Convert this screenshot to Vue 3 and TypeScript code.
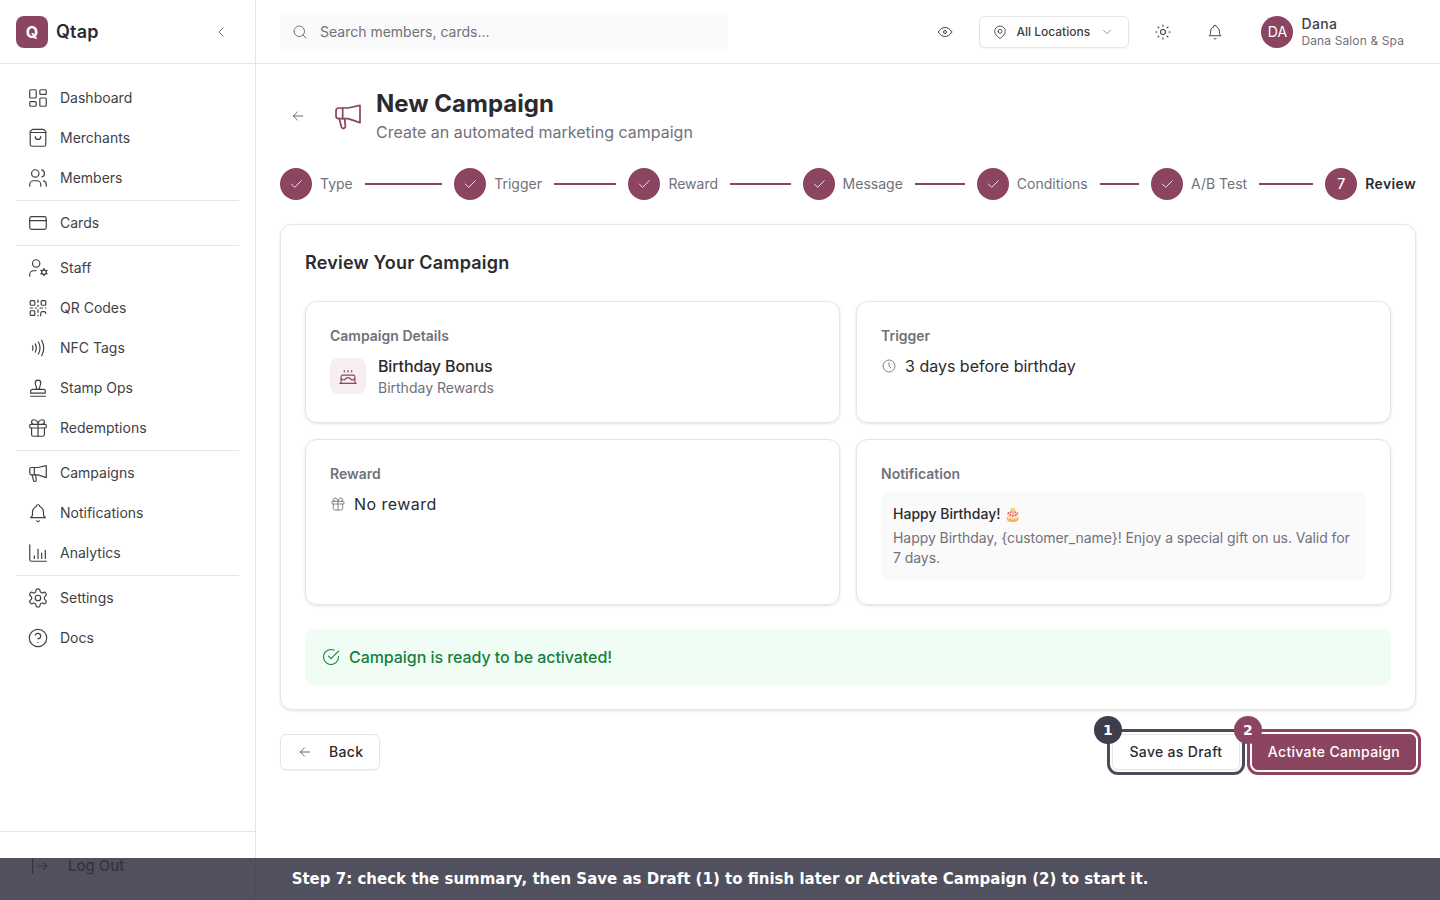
<script setup lang="ts">
// Icon paths all sit on a 24x24 viewBox
const icons: Record<string, string[]> = {
  dashboard: [
    'M4 3h5a1 1 0 0 1 1 1v7a1 1 0 0 1-1 1H4a1 1 0 0 1-1-1V4a1 1 0 0 1 1-1z',
    'M4 16h5a1 1 0 0 1 1 1v3a1 1 0 0 1-1 1H4a1 1 0 0 1-1-1v-3a1 1 0 0 1 1-1z',
    'M15 12h5a1 1 0 0 1 1 1v7a1 1 0 0 1-1 1h-5a1 1 0 0 1-1-1v-7a1 1 0 0 1 1-1z',
    'M15 3h5a1 1 0 0 1 1 1v3a1 1 0 0 1-1 1h-5a1 1 0 0 1-1-1V4a1 1 0 0 1 1-1z',
  ],
  bag: [
    'M6.500 2.500h11a2 2 0 0 1 1.600.8L20.500 5v14a2 2 0 0 1-2 2h-13a2 2 0 0 1-2-2V5l1.400-1.700A2 2 0 0 1 6.500 2.500z',
    'M3.500 6h17',
    'M9 10.500a3 3 0 0 0 6 0',
  ],
  users: [
    'M5 7a4 4 0 1 0 8 0a4 4 0 1 0-8 0',
    'M3 21v-2a4 4 0 0 1 4-4h4a4 4 0 0 1 4 4v2',
    'M16 3.130a4 4 0 0 1 0 7.750',
    'M21 21v-2a4 4 0 0 0-3-3.850',
  ],
  card: ['M5 5h14a2 2 0 0 1 2 2v10a2 2 0 0 1-2 2H5a2 2 0 0 1-2-2V7a2 2 0 0 1 2-2z', 'M3 9.500h18'],
  staff: [
    'M6 7a4 4 0 1 0 8 0a4 4 0 1 0-8 0',
    'M3 21v-2a4 4 0 0 1 4-4h3',
    'M16 16.500a2.500 2.500 0 1 0 5 0a2.500 2.500 0 1 0-5 0',
    'M18.500 12.500V14',
    'M18.500 19v1.500',
    'M22 14.500l-1.300.8',
    'M16.300 17.700l-1.300.8',
    'M15 14.500l1.300.8',
    'M20.700 17.700l1.300.8',
  ],
  qr: [
    'M3.500 5a1 1 0 0 1 1-1h3a1 1 0 0 1 1 1v3a1 1 0 0 1-1 1h-3a1 1 0 0 1-1-1z',
    'M15.500 5a1 1 0 0 1 1-1h3a1 1 0 0 1 1 1v3a1 1 0 0 1-1 1h-3a1 1 0 0 1-1-1z',
    'M3.500 16a1 1 0 0 1 1-1h3a1 1 0 0 1 1 1v3a1 1 0 0 1-1 1h-3a1 1 0 0 1-1-1z',
    'M12 3.500v2.500',
    'M12 9v1',
    'M3.500 12H6',
    'M9 12h1.500',
    'M14 12h3',
    'M20 12h.5',
    'M12 14v2.500',
    'M12 20v.5',
    'M15 20.500V18a2 2 0 0 1 2-2h1.500a2 2 0 0 1 2 2',
  ],
  nfc: [
    'M6 9.500a6 6 0 0 1 0 5',
    'M9 7.500a10 10 0 0 1 0 9',
    'M12.500 5.500a14 14 0 0 1 0 13',
    'M16 3.500a18 18 0 0 1 0 17',
  ],
  stamp: [
    'M9 6.500a3 3 0 1 1 6 0c0 2.500-1.500 3.500-1.500 7h-3C10.500 10 9 9 9 6.500z',
    'M4 15.500a2 2 0 0 1 2-2h12a2 2 0 0 1 2 2v2H4z',
    'M4 21h16',
  ],
  gift: [
    'M4 8h16a1 1 0 0 1 1 1v2a1 1 0 0 1-1 1H4a1 1 0 0 1-1-1V9a1 1 0 0 1 1-1z',
    'M12 8v13',
    'M19 12v7a2 2 0 0 1-2 2H7a2 2 0 0 1-2-2v-7',
    'M7.500 8a2.500 2.500 0 0 1 0-5c2.500 0 4.500 2.500 4.500 5c0-2.500 2-5 4.500-5a2.500 2.500 0 0 1 0 5',
  ],
  megaphone: [
    'M21 4v13l-9-3H5a2 2 0 0 1-2-2V8a2 2 0 0 1 2-2h7z',
    'M8 6v8',
    'M5.500 14l1.500 6a1.500 1.500 0 0 0 3-.5L9.500 14',
  ],
  bell: [
    'M10 5a2 2 0 1 1 4 0a7 7 0 0 1 4 6v3a4 4 0 0 0 2 3H4a4 4 0 0 0 2-3v-3a7 7 0 0 1 4-6z',
    'M10.500 20.500a1.700 1.700 0 0 0 3 0',
  ],
  chart: ['M3 3v16a2 2 0 0 0 2 2h16', 'M8 18v-3', 'M12 18V8', 'M16 18v-6', 'M20 18v-9'],
  settings: [
    'M12.220 2h-.44a2 2 0 0 0-2 2v.18a2 2 0 0 1-1 1.730l-.43.25a2 2 0 0 1-2 0l-.15-.08a2 2 0 0 0-2.730.73l-.22.38a2 2 0 0 0 .73 2.730l.15.1a2 2 0 0 1 1 1.720v.51a2 2 0 0 1-1 1.740l-.15.09a2 2 0 0 0-.73 2.730l.22.38a2 2 0 0 0 2.730.73l.15-.08a2 2 0 0 1 2 0l.43.25a2 2 0 0 1 1 1.730V20a2 2 0 0 0 2 2h.44a2 2 0 0 0 2-2v-.18a2 2 0 0 1 1-1.730l.43-.25a2 2 0 0 1 2 0l.15.08a2 2 0 0 0 2.730-.73l.22-.39a2 2 0 0 0-.73-2.730l-.15-.08a2 2 0 0 1-1-1.740v-.5a2 2 0 0 1 1-1.740l.15-.09a2 2 0 0 0 .73-2.730l-.22-.38a2 2 0 0 0-2.730-.73l-.15.08a2 2 0 0 1-2 0l-.43-.25a2 2 0 0 1-1-1.730V4a2 2 0 0 0-2-2z',
    'M9 12a3 3 0 1 0 6 0a3 3 0 1 0-6 0',
  ],
  help: [
    'M2.500 12a9.500 9.500 0 1 0 19 0a9.500 9.500 0 1 0-19 0',
    'M9.090 9a3 3 0 0 1 5.830 1c0 2-3 3-3 3',
    'M12 17h.01',
  ],
  logout: ['M5 4v16', 'M11 12h9', 'M17 8.500l3.500 3.500l-3.500 3.500'],
  search: ['M4 11a7 7 0 1 0 14 0a7 7 0 1 0-14 0', 'M20 20l-4-4'],
  chevLeft: ['M15 6l-6 6l6 6'],
  chevDown: ['M6 9l6 6l6-6'],
  arrowLeft: ['M5 12h14', 'M5 12l6 6', 'M5 12l6-6'],
  eye: [
    'M10 12a2 2 0 1 0 4 0a2 2 0 1 0-4 0',
    'M21 12c-2.400 4-5.400 6-9 6c-3.600 0-6.600-2-9-6c2.400-4 5.400-6 9-6c3.600 0 6.600 2 9 6',
  ],
  pin: [
    'M9 11a3 3 0 1 0 6 0a3 3 0 0 0-6 0',
    'M17.657 16.657L13.414 20.900a2 2 0 0 1-2.827 0l-4.244-4.243a8 8 0 1 1 11.314 0z',
  ],
  sun: [
    'M9 12a3 3 0 1 0 6 0a3 3 0 1 0-6 0',
    'M12 3.500v1.500',
    'M12 19v1.500',
    'M3.500 12H5',
    'M19 12h1.500',
    'M6 6l1 1',
    'M17 17l1 1',
    'M6 18l1-1',
    'M17 7l1-1',
  ],
  check: ['M5 12l5 5l10-10'],
  checkCircle: ['M21 11.100V12a9 9 0 1 1-5.300-8.200', 'M9 11l3 3l9-9'],
  clock: ['M3 12a9 9 0 1 0 18 0a9 9 0 1 0-18 0', 'M12 7v5l3 3'],
  cake: [
    'M3 20h18',
    'M4.500 20v-7a2 2 0 0 1 2-2h11a2 2 0 0 1 2 2v7',
    'M4.500 15c1.500 1.500 3.500 1.500 5 0s3.500-1.500 5 0s3.500 1.500 5 0',
    'M8 6v1.500',
    'M12 6v1.500',
    'M16 6v1.500',
  ],
}

interface NavItem {
  label: string
  icon: string
}

const navGroups: NavItem[][] = [
  [
    { label: 'Dashboard', icon: 'dashboard' },
    { label: 'Merchants', icon: 'bag' },
    { label: 'Members', icon: 'users' },
  ],
  [{ label: 'Cards', icon: 'card' }],
  [
    { label: 'Staff', icon: 'staff' },
    { label: 'QR Codes', icon: 'qr' },
    { label: 'NFC Tags', icon: 'nfc' },
    { label: 'Stamp Ops', icon: 'stamp' },
    { label: 'Redemptions', icon: 'gift' },
  ],
  [
    { label: 'Campaigns', icon: 'megaphone' },
    { label: 'Notifications', icon: 'bell' },
    { label: 'Analytics', icon: 'chart' },
  ],
  [
    { label: 'Settings', icon: 'settings' },
    { label: 'Docs', icon: 'help' },
  ],
]

const doneSteps = ['Type', 'Trigger', 'Reward', 'Message', 'Conditions', 'A/B Test']
</script>

<template>
  <div class="app">
    <aside class="sidebar">
      <div class="brand">
        <span class="logo">Q</span>
        <span class="brand-name">Qtap</span>
        <svg class="ico collapse" viewBox="0 0 24 24"><path v-for="d in icons.chevLeft" :key="d" :d="d" /></svg>
      </div>
      <nav class="nav">
        <div v-for="(group, i) in navGroups" :key="i" class="nav-group">
          <a v-for="item in group" :key="item.label" class="nav-item">
            <svg class="ico nav-ico" viewBox="0 0 24 24"><path v-for="d in icons[item.icon]" :key="d" :d="d" /></svg>
            {{ item.label }}
          </a>
        </div>
      </nav>
      <div class="side-foot">
        <a class="nav-item logout">
          <svg class="ico nav-ico" viewBox="0 0 24 24"><path v-for="d in icons.logout" :key="d" :d="d" /></svg>
          Log Out
        </a>
      </div>
    </aside>

    <div class="main">
      <header class="topbar">
        <div class="search">
          <svg class="ico search-ico" viewBox="0 0 24 24"><path v-for="d in icons.search" :key="d" :d="d" /></svg>
          <span>Search members, cards...</span>
        </div>
        <div class="top-right">
          <svg class="ico top-ico eye" viewBox="0 0 24 24"><path v-for="d in icons.eye" :key="d" :d="d" /></svg>
          <div class="loc">
            <svg class="ico loc-pin" viewBox="0 0 24 24"><path v-for="d in icons.pin" :key="d" :d="d" /></svg>
            <span class="loc-text">All Locations</span>
            <svg class="ico loc-chev" viewBox="0 0 24 24"><path v-for="d in icons.chevDown" :key="d" :d="d" /></svg>
          </div>
          <svg class="ico top-ico sun" viewBox="0 0 24 24"><path v-for="d in icons.sun" :key="d" :d="d" /></svg>
          <svg class="ico top-ico bell" viewBox="0 0 24 24"><path v-for="d in icons.bell" :key="d" :d="d" /></svg>
          <div class="user">
            <span class="avatar">DA</span>
            <div class="user-text">
              <div class="user-name">Dana</div>
              <div class="user-org">Dana Salon &amp; Spa</div>
            </div>
          </div>
        </div>
      </header>

      <main class="content">
        <div class="page-head">
          <span class="back-btn">
            <svg class="ico back-ico" viewBox="0 0 24 24"><path v-for="d in icons.arrowLeft" :key="d" :d="d" /></svg>
          </span>
          <svg class="ico head-ico" viewBox="0 0 24 24"><path v-for="d in icons.megaphone" :key="d" :d="d" /></svg>
          <div>
            <h1>New Campaign</h1>
            <p>Create an automated marketing campaign</p>
          </div>
        </div>

        <div class="steps">
          <div v-for="s in doneSteps" :key="s" class="step">
            <span class="dot">
              <svg class="ico dot-check" viewBox="0 0 24 24"><path v-for="d in icons.check" :key="d" :d="d" /></svg>
            </span>
            <span class="step-label">{{ s }}</span>
            <span class="line"></span>
          </div>
          <div class="step last">
            <span class="dot">7</span>
            <span class="step-label current">Review</span>
          </div>
        </div>

        <section class="card">
          <h2>Review Your Campaign</h2>
          <div class="grid">
            <div class="sub">
              <div class="sub-label">Campaign Details</div>
              <div class="detail">
                <span class="cake-box">
                  <svg class="ico cake" viewBox="0 0 24 24"><path v-for="d in icons.cake" :key="d" :d="d" /></svg>
                </span>
                <div>
                  <div class="detail-name">Birthday Bonus</div>
                  <div class="detail-sub">Birthday Rewards</div>
                </div>
              </div>
            </div>
            <div class="sub">
              <div class="sub-label">Trigger</div>
              <div class="val">
                <svg class="ico val-ico" viewBox="0 0 24 24"><path v-for="d in icons.clock" :key="d" :d="d" /></svg>
                3 days before birthday
              </div>
            </div>
            <div class="sub">
              <div class="sub-label">Reward</div>
              <div class="val wide">
                <svg class="ico val-ico" viewBox="0 0 24 24"><path v-for="d in icons.gift" :key="d" :d="d" /></svg>
                No reward
              </div>
            </div>
            <div class="sub">
              <div class="sub-label">Notification</div>
              <div class="notif">
                <div class="notif-title">Happy Birthday! 🎂</div>
                <div class="notif-body">Happy Birthday, {customer_name}! Enjoy a special gift on us. Valid for 7 days.</div>
              </div>
            </div>
          </div>
          <div class="ready">
            <svg class="ico ready-ico" viewBox="0 0 24 24"><path v-for="d in icons.checkCircle" :key="d" :d="d" /></svg>
            Campaign is ready to be activated!
          </div>
        </section>

        <div class="actions">
          <button class="btn">
            <svg class="ico btn-ico" viewBox="0 0 24 24"><path v-for="d in icons.arrowLeft" :key="d" :d="d" /></svg>
            Back
          </button>
          <div class="actions-right">
            <button class="btn mark mark-dark">
              <span class="badge">1</span>
              Save as Draft
            </button>
            <button class="btn primary mark mark-primary">
              <span class="badge">2</span>
              Activate Campaign
            </button>
          </div>
        </div>
      </main>
    </div>

    <div class="hint">Step 7: check the summary, then Save as Draft (1) to finish later or Activate Campaign (2) to start it.</div>
  </div>
</template>

<style scoped>
.app {
  display: flex;
  height: 900px;
  overflow: hidden;
  background: #fff;
  color: #2b2b2f;
  font-family: Inter, "Noto Sans", sans-serif;
  font-size: 14px;
  line-height: 20px;
}
.ico {
  fill: none;
  stroke: currentColor;
  stroke-width: 1.3;
  stroke-linecap: round;
  stroke-linejoin: round;
  flex: none;
  display: block;
}

/* sidebar */
.sidebar {
  width: 256px;
  flex: none;
  box-sizing: border-box;
  border-right: 1px solid #e5e5e5;
  display: flex;
  flex-direction: column;
}
.brand {
  height: 64px;
  box-sizing: border-box;
  border-bottom: 1px solid #e5e5e5;
  padding: 0 16px;
  display: flex;
  align-items: center;
  gap: 8px;
}
.logo {
  width: 32px;
  height: 32px;
  border-radius: 8px;
  background: #8b4560;
  color: #fff;
  font-weight: 700;
  font-size: 16px;
  display: flex;
  align-items: center;
  justify-content: center;
}
.brand-name {
  font-size: 18px;
  line-height: 28px;
  font-weight: 600;
  letter-spacing: 0.2px;
}
.collapse {
  width: 16px;
  height: 16px;
  margin-left: auto;
  margin-right: 10px;
  color: #52525b;
}
.nav {
  flex: 1;
  padding: 14px 16px 0;
}
.nav-group + .nav-group {
  margin-top: 2px;
  padding-top: 2px;
  border-top: 1px solid #e5e5e5;
}
.nav-item {
  height: 40px;
  display: flex;
  align-items: center;
  gap: 11px;
  padding-left: 11px;
  color: #3f3f46;
  font-size: 14px;
}
.nav-ico {
  width: 22px;
  height: 22px;
  color: #3f3f46;
}
.side-foot {
  height: 69px;
  box-sizing: border-box;
  border-top: 1px solid #e5e5e5;
  padding: 14px 16px 0;
}
.logout {
  padding-left: 12px;
  gap: 18px;
  color: #7a2744;
  font-weight: 500;
  font-size: 15px;
}
.logout .nav-ico {
  color: #7a2744;
}

/* top bar */
.main {
  flex: 1;
  min-width: 0;
}
.topbar {
  height: 64px;
  box-sizing: border-box;
  border-bottom: 1px solid #e5e5e5;
  padding: 0 36px 0 24px;
  display: flex;
  align-items: center;
  justify-content: space-between;
}
.search {
  width: 448px;
  height: 38px;
  box-sizing: border-box;
  padding-left: 11px;
  background: #fafafa;
  border-radius: 6px;
  display: flex;
  align-items: center;
  gap: 11px;
  color: #71717a;
  font-size: 14px;
}
.search-ico {
  width: 18px;
  height: 18px;
}
.top-right {
  display: flex;
  align-items: center;
}
.top-ico {
  width: 18px;
  height: 18px;
  color: #3f3f46;
}
.eye {
  margin-right: 25px;
}
.loc {
  width: 150px;
  height: 32px;
  box-sizing: border-box;
  border: 1px solid #e5e5e5;
  border-radius: 6px;
  box-shadow: 0 1px 2px rgba(0, 0, 0, 0.05);
  padding: 0 14px 0 12px;
  display: flex;
  align-items: center;
  gap: 8px;
}
.loc-pin {
  width: 16px;
  height: 16px;
  color: #3f3f46;
}
.loc-text {
  font-size: 12px;
  font-weight: 500;
  color: #3f3f46;
}
.loc-chev {
  width: 14px;
  height: 14px;
  margin-left: auto;
  color: #71717a;
  stroke-width: 1.25;
}
.sun {
  margin-left: 24px;
  width: 20px;
  height: 20px;
}
.bell {
  margin-left: 33px;
  width: 18px;
  height: 18px;
  margin-right: 1px;
}
.user {
  margin-left: 36px;
  display: flex;
  align-items: center;
  gap: 8px;
}
.avatar {
  width: 32px;
  height: 32px;
  border-radius: 50%;
  background: #8b4560;
  color: #fff;
  font-size: 14px;
  display: flex;
  align-items: center;
  justify-content: center;
}
.user-name {
  font-size: 14px;
  font-weight: 500;
  line-height: 18px;
  letter-spacing: 0.35px;
  color: #3f3f46;
}
.user-org {
  font-size: 12px;
  line-height: 16px;
  letter-spacing: 0.12px;
  color: #71717a;
}

/* page */
.content {
  padding: 24px;
}
.page-head {
  display: flex;
  align-items: center;
}
.back-btn {
  width: 36px;
  height: 36px;
  display: flex;
  align-items: center;
  justify-content: center;
}
.back-ico {
  width: 16px;
  height: 16px;
  color: #52525b;
}
.head-ico {
  width: 32px;
  height: 32px;
  margin: 0 12px 0 16px;
  color: #8b4560;
}
h1 {
  margin: 0;
  font-size: 24px;
  line-height: 32px;
  font-weight: 700;
}
.page-head p {
  margin: 0;
  font-size: 16px;
  line-height: 24px;
  color: #71717a;
}

.steps {
  display: flex;
  align-items: center;
  margin-top: 24px;
}
.step {
  flex: 1;
  display: flex;
  align-items: center;
  gap: 8px;
}
.step.last {
  flex: none;
}
.dot {
  width: 32px;
  height: 32px;
  border-radius: 50%;
  flex: none;
  background: #8b4560;
  color: #fff;
  font-size: 14px;
  font-weight: 500;
  display: flex;
  align-items: center;
  justify-content: center;
}
.dot-check {
  width: 16px;
  height: 16px;
  stroke-width: 1.25;
}
.step-label {
  font-size: 14px;
  color: #71717a;
  white-space: nowrap;
}
.step-label.current {
  color: #2b2b2f;
  font-weight: 600;
  letter-spacing: 0.35px;
}
.line {
  flex: 1;
  height: 2px;
  margin: 0 12px 0 4px;
  background: #8b4560;
}

.card {
  margin-top: 24px;
  border: 1px solid #e5e5e5;
  border-radius: 12px;
  box-shadow: 0 1px 3px rgba(0, 0, 0, 0.12);
  padding: 24px;
}
h2 {
  margin: 0 0 24px;
  font-size: 18px;
  line-height: 28px;
  font-weight: 600;
  letter-spacing: 0.2px;
}
.grid {
  display: grid;
  grid-template-columns: 1fr 1fr;
  gap: 16px;
}
.sub {
  border: 1px solid #e5e5e5;
  border-radius: 12px;
  box-shadow: 0 1px 3px rgba(0, 0, 0, 0.12);
  padding: 24px;
}
.sub-label {
  font-size: 14px;
  line-height: 20px;
  font-weight: 600;
  color: #71717a;
  margin-bottom: 8px;
}
.detail {
  display: flex;
  align-items: center;
  gap: 12px;
}
.cake-box {
  width: 36px;
  height: 36px;
  border-radius: 8px;
  background: #f6eef1;
  display: flex;
  align-items: center;
  justify-content: center;
}
.cake {
  width: 22px;
  height: 22px;
  color: #8b4560;
  stroke-width: 1.25;
}
.detail-name {
  font-size: 16px;
  line-height: 24px;
  font-weight: 500;
  letter-spacing: -0.14px;
}
.detail-sub {
  font-size: 14px;
  line-height: 20px;
  color: #71717a;
}
.val {
  display: flex;
  align-items: center;
  gap: 8px;
  font-size: 16px;
  line-height: 24px;
}
.val.wide {
  letter-spacing: 0.45px;
}
.val-ico {
  width: 16px;
  height: 16px;
  color: #71717a;
}
.notif {
  background: #fafafa;
  border-radius: 8px;
  padding: 12px;
}
.notif-title {
  font-size: 14px;
  line-height: 20px;
  font-weight: 500;
  margin-bottom: 4px;
}
.notif-body {
  font-size: 14px;
  line-height: 20px;
  letter-spacing: -0.06px;
  color: #71717a;
}
.ready {
  margin-top: 24px;
  padding: 16px;
  background: #f0fdf4;
  border-radius: 8px;
  display: flex;
  align-items: center;
  gap: 8px;
  font-size: 16px;
  line-height: 24px;
  font-weight: 500;
  letter-spacing: -0.06px;
  color: #15803d;
}
.ready-ico {
  width: 20px;
  height: 20px;
}

.actions {
  margin-top: 24px;
  display: flex;
  justify-content: space-between;
}
.actions-right {
  display: flex;
  gap: 12px;
}
.btn {
  position: relative;
  height: 36px;
  box-sizing: border-box;
  padding: 0 16px;
  border: 1px solid #e5e5e5;
  border-radius: 6px;
  background: #fff;
  color: #2b2b2f;
  font-family: inherit;
  font-size: 14px;
  line-height: 20px;
  font-weight: 500;
  letter-spacing: 0.32px;
  box-shadow: 0 1px 2px rgba(0, 0, 0, 0.05);
  display: flex;
  align-items: center;
  gap: 16px;
}
.btn-ico {
  width: 16px;
  height: 16px;
  color: #52525b;
}
.btn.primary {
  padding: 0 15px;
  background: #8b4560;
  border-color: #8b4560;
  color: #fff;
}
.mark {
  outline-style: solid;
  outline-width: 3px;
  outline-offset: 2px;
}
.mark-dark {
  padding: 0 16.5px;
  outline-color: #4b4b5a;
}
.mark-primary {
  outline-color: #8b4560;
}
.badge {
  position: absolute;
  left: -19px;
  top: -19px;
  width: 28px;
  height: 28px;
  border-radius: 50%;
  color: #fff;
  font-family: "DejaVu Sans", sans-serif;
  font-size: 14px;
  font-weight: 700;
  letter-spacing: 0;
  display: flex;
  align-items: center;
  justify-content: center;
}
.mark-dark .badge {
  background: #3d3d4b;
}
.mark-primary .badge {
  background: #8b4560;
}

/* instruction strip along the bottom */
.hint {
  position: absolute;
  left: 0;
  right: 0;
  top: 858px;
  height: 42px;
  background: rgba(49, 49, 66, 0.85);
  color: #fff;
  font-family: "DejaVu Sans", sans-serif;
  font-size: 15px;
  font-weight: 700;
  display: flex;
  align-items: center;
  justify-content: center;
}
</style>

<style>
html,
body {
  margin: 0;
  overflow: hidden;
}
</style>
